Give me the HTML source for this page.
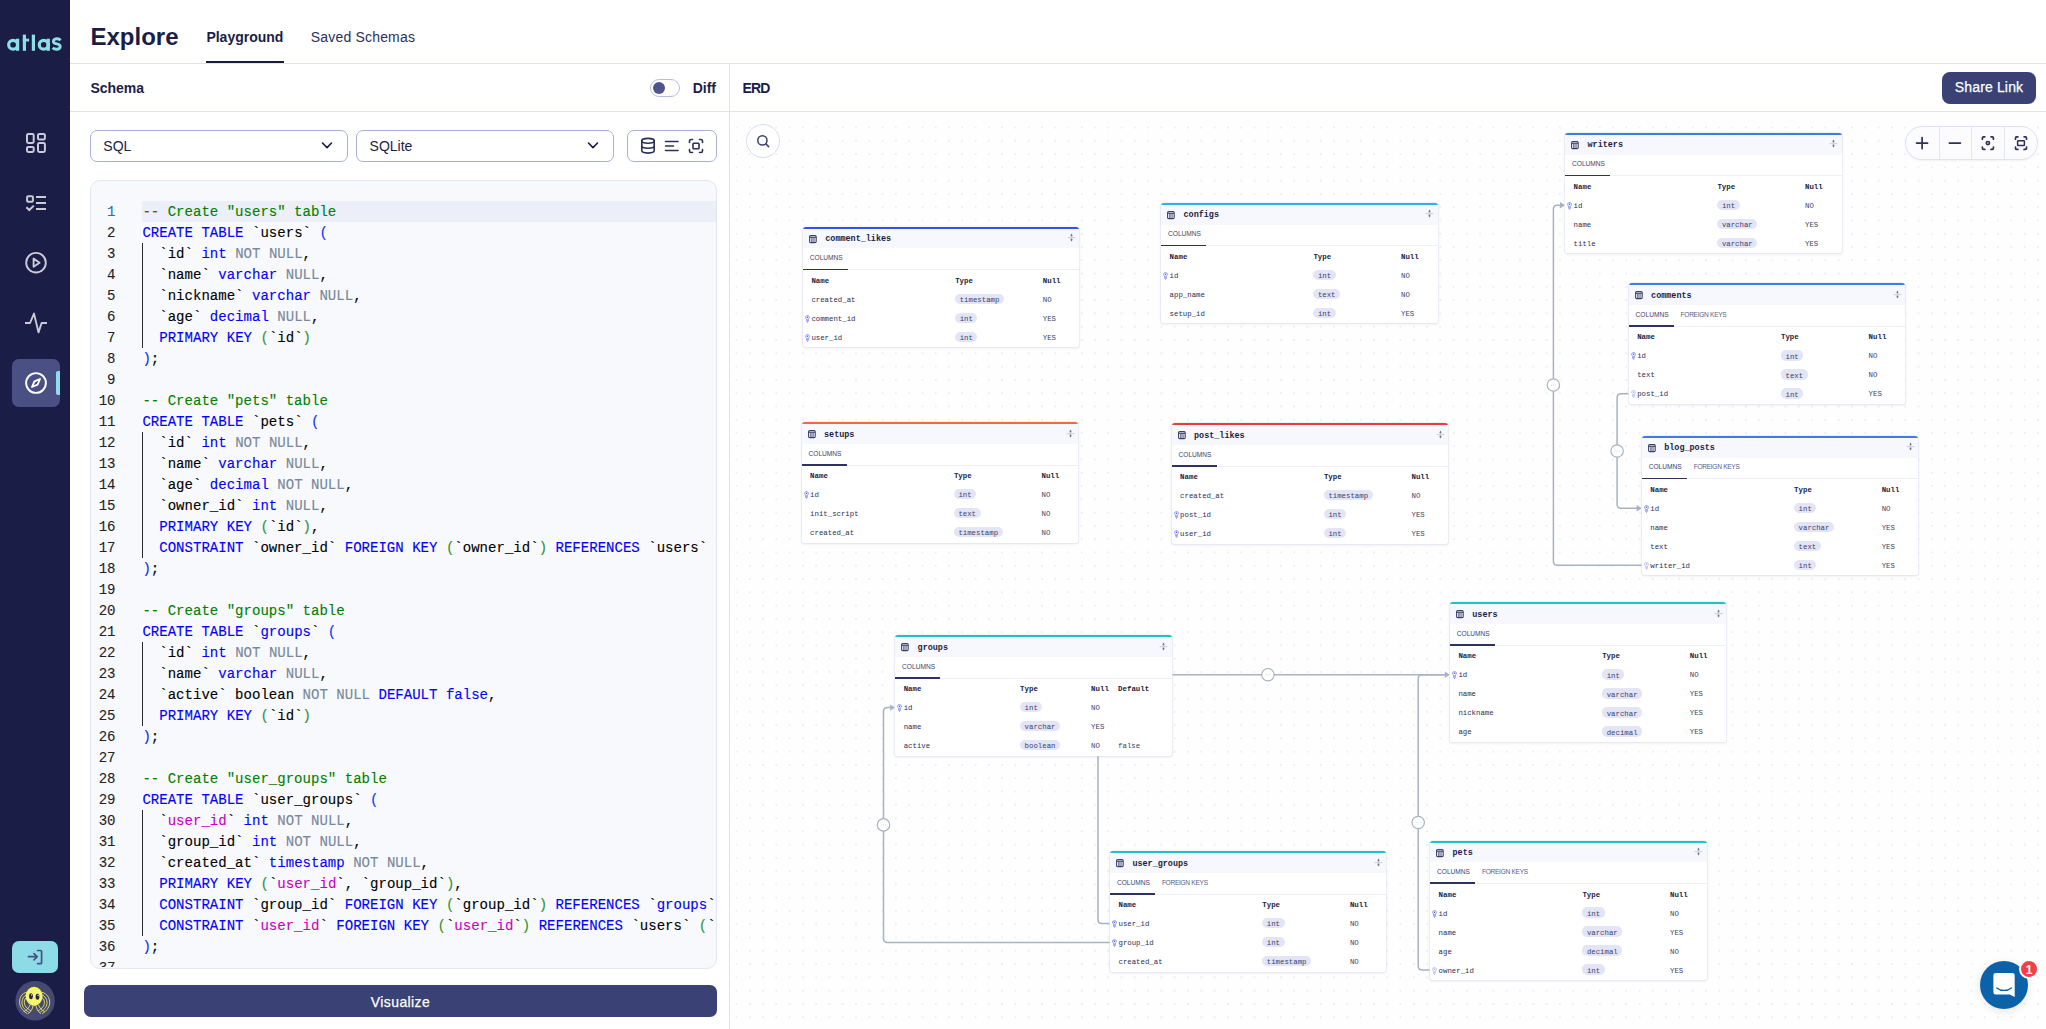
<!DOCTYPE html>
<html><head><meta charset="utf-8"><title>Atlas Explore</title><style>
*{box-sizing:border-box;margin:0;padding:0}
html,body{width:2046px;height:1029px;overflow:hidden;background:#fff;font-family:"Liberation Sans",sans-serif;color:#1a1d45}
.abs{position:absolute}
#side{position:absolute;left:0;top:0;width:70px;height:1029px;background:#1a1d45}
.txt{position:absolute;white-space:pre;line-height:1}
.hline{position:absolute;height:1px;background:#dfe2f2}
.vline{position:absolute;width:1px;background:#dfe2f2}
.sel{position:absolute;height:32px;border:1px solid #a9afd6;border-radius:7px;background:#fff}
#editor{position:absolute;left:90px;top:180px;width:627px;height:788.5px;background:#f8f9fd;border:1px solid #e2e5f4;border-radius:10px;overflow:hidden}
.ln{position:absolute;left:0;width:115.5px;-webkit-text-stroke:0.1px;text-align:right;font-family:"Liberation Mono",monospace;font-size:14.05px;margin-top:1px;line-height:21px;height:21px;color:#222;white-space:pre}
.ln.act{color:#1f6fb2}
.cl{position:absolute;left:142.4px;font-family:"Liberation Mono",monospace;font-size:14.05px;line-height:21px;height:21px;color:#000;white-space:pre;margin-top:1px;-webkit-text-stroke:0.12px}
.c{color:#008000}.k{color:#0000ff}.o{color:#778899}.p{color:#c700c7}.b1{color:#0431fa}.b2{color:#319331}
#canvas{position:absolute;left:730px;top:112px;width:1316px;height:917px;overflow:hidden;background:#fefeff}
.edges{position:absolute;left:0;top:0}
.tb{position:absolute;width:276.5px;background:#fff;border-top:2px solid #3a7de9;border-radius:3px 3px 2px 2px;box-shadow:0 0 0 0.6px rgba(225,228,240,0.9),0 1px 3px rgba(30,30,70,0.10)}
.th{position:absolute;left:0;top:0;width:100%;height:19.8px;background:#f7f8fe}
.ticon{position:absolute;left:6.4px;top:6px}
.move{position:absolute;left:264px;top:4.5px}
.tname{position:absolute;left:22.5px;top:6.6px;font-family:"Liberation Mono",monospace;font-weight:700;font-size:8.45px;line-height:1;color:#1a1d45;white-space:pre}
.tabs{position:absolute;left:0;top:19px;width:100%;height:22.5px;border-bottom:1px solid #eef0f7}
.tab1,.tab2{position:absolute;top:7.6px;font-size:6.6px;line-height:1;color:#3d4268;white-space:pre}
.tab1{left:7px}.tab2{left:52px;color:#585d86;letter-spacing:-0.3px}
.tabul{position:absolute;left:0;bottom:-1px;width:45px;height:1.6px;background:#2d3260}
.hd{position:absolute;font-family:"Liberation Mono",monospace;font-weight:700;font-size:7.4px;line-height:1;color:#1a1d45;white-space:pre}
.rn,.rv{position:absolute;font-family:"Liberation Mono",monospace;font-size:7.35px;line-height:1;color:#2a2e55;white-space:pre}
.rv{color:#3a3f66}
.pill{position:absolute;height:10.3px;padding:3.3px 4.5px 0 4.5px;border-radius:5px;background:#e3e5f6;font-family:"Liberation Mono",monospace;font-size:7.35px;line-height:1;color:#3a3f6a;white-space:pre;margin-top:-2.6px}
.kw{position:absolute;left:2.1px}
.key{display:block}

</style></head><body>
<div id="side">
  <svg class="abs" style="left:0;top:0" width="70" height="70" viewBox="0 0 70 70">
    <g fill="#8fdde8">
      <path d="M13.1 38.7a6.05 6.05 0 1 0 0 12.1a6.05 6.05 0 1 0 0-12.1zm0 3.2a2.85 2.85 0 1 1 0 5.7a2.85 2.85 0 1 1 0-5.7z"/>
      <rect x="16" y="38.7" width="3.2" height="12.1"/>
      <rect x="22.8" y="34.6" width="3.2" height="16.2"/>
      <rect x="22.8" y="38.7" width="6.3" height="2.8"/>
      <rect x="31.8" y="34.6" width="3.2" height="16.2"/>
      <path d="M43.7 38.7a6.05 6.05 0 1 0 0 12.1a6.05 6.05 0 1 0 0-12.1zm0 3.2a2.85 2.85 0 1 1 0 5.7a2.85 2.85 0 1 1 0-5.7z"/>
      <rect x="46.6" y="38.7" width="3.3" height="12.1"/>
    </g>
    <path d="M60.6 40.2c-0.8-0.9-2.2-1.4-3.6-1.4c-2 0-3.6 1.1-3.6 2.6c0 1.6 1.5 2.1 3.4 2.5c1.9 0.4 3.4 0.9 3.4 2.6c0 1.6-1.6 2.7-3.6 2.7c-1.6 0-3-0.5-3.9-1.5" fill="none" stroke="#8fdde8" stroke-width="2.9"/>
  </svg>
  <!-- dashboard -->
  <svg class="abs" style="left:25px;top:132px" width="22" height="22" viewBox="0 0 22 22" fill="none" stroke="#c9cbd8" stroke-width="2">
    <rect x="2" y="2" width="6.7" height="8.9" rx="1.3"/><rect x="13" y="2" width="6.9" height="5.6" rx="1.3"/>
    <rect x="2" y="15" width="6.7" height="4.9" rx="1.3"/><rect x="13" y="11" width="6.9" height="8.9" rx="1.3"/>
  </svg>
  <!-- list check -->
  <svg class="abs" style="left:25px;top:194px" width="22" height="20" viewBox="0 0 22 20" fill="none" stroke="#c9cbd8" stroke-width="2">
    <rect x="2.1" y="2.3" width="5.8" height="5.5" rx="1"/><path d="M11 3H21M11 9H21M11 15H21"/><path d="M1.4 13.2L4.3 16L8.8 11.6"/>
  </svg>
  <!-- play -->
  <svg class="abs" style="left:24px;top:251px" width="24" height="24" viewBox="0 0 24 24" fill="none" stroke="#c9cbd8" stroke-width="1.9">
    <circle cx="12" cy="11.7" r="9.8"/><path d="M9.6 7.6V15.8L15.6 11.7Z" stroke-linejoin="round"/>
  </svg>
  <!-- activity -->
  <svg class="abs" style="left:24px;top:312px" width="24" height="22" viewBox="0 0 24 22" fill="none" stroke="#c9cbd8" stroke-width="1.9" stroke-linejoin="round">
    <path d="M1 11H6L10 1.6L14.5 20.4L17.6 11H23"/>
  </svg>
  <!-- active compass -->
  <div class="abs" style="left:12px;top:359px;width:48px;height:48px;border-radius:7px;background:#4a5083"></div>
  <div class="abs" style="left:55.6px;top:371px;width:4.4px;height:24px;border-radius:2px 0 0 2px;background:#8fdde8"></div>
  <svg class="abs" style="left:24px;top:371px" width="24" height="24" viewBox="0 0 24 24" fill="none" stroke="#fff" stroke-width="1.9" stroke-linejoin="round">
    <circle cx="12" cy="12" r="9.9"/><path d="M16 8L13.6 13.6L8 16L10.4 10.4Z"/>
  </svg>
  <!-- login -->
  <div class="abs" style="left:12px;top:941px;width:46px;height:32px;border-radius:7px;background:#8ddbe6"></div>
  <svg class="abs" style="left:26px;top:947px" width="18" height="20" viewBox="0 0 18 20" fill="none" stroke="#4a5083" stroke-width="1.7" stroke-linecap="round" stroke-linejoin="round">
    <path d="M2.4 9.7H11M8 6.6L11.2 9.7L8 12.8"/><path d="M11.6 3.5H14.6C15.2 3.5 15.6 3.9 15.6 4.5V15.7C15.6 16.3 15.2 16.7 14.6 16.7H11.6"/>
  </svg>
  <!-- avatar -->
  <svg class="abs" style="left:15px;top:981px" width="40" height="40" viewBox="0 0 40 40">
    <circle cx="20.1" cy="19.7" r="19.7" fill="#474a70"/>
    <g fill="none" stroke="#f2f06a" stroke-width="0.85" stroke-linecap="round">
      <path d="M13 11C8 11.5 5 15 4.6 20C4.3 25 7 29.5 12 32.5"/>
      <path d="M13.5 13C9.5 14 7.2 17 7 21C6.8 25 9 28.5 13.5 31"/>
      <path d="M12 16C9.5 17.5 8.8 20.5 9.6 23.5C10.4 26 12.5 28 15.5 29.5"/>
      <path d="M15 24C14 27 11.5 29.5 9 30.5"/>
      <path d="M25.5 11C30.5 11.5 33.8 15 34.6 20C35.2 25 32.5 29.5 27.5 32.5"/>
      <path d="M25 13C29 14 31.6 17 32 21C32.3 25 30 28.5 25.5 31"/>
      <path d="M26.5 16C29 17.5 30 20.5 29.2 23.5C28.4 26 26.3 28 23.5 29.5"/>
      <path d="M23.5 24C24.5 27 27 29.5 29.5 30.5"/>
      <path d="M18 25C17.5 28 16 30.5 13.5 32.5"/><path d="M21 25C21.5 28 23 30.5 25.5 32.5"/>
    </g>
    <ellipse cx="19.1" cy="15.3" rx="8.4" ry="9.6" fill="#f6f56c"/>
    <ellipse cx="16" cy="15.3" rx="1.9" ry="3" fill="#23264d"/><ellipse cx="22.5" cy="15.8" rx="1.9" ry="3" fill="#23264d"/>
    <circle cx="16.6" cy="13.9" r="0.6" fill="#fff"/><circle cx="23.1" cy="14.4" r="0.6" fill="#fff"/>
  </svg>
</div>

<!-- header -->
<div class="txt" style="left:90.5px;top:24.6px;font-size:24px;font-weight:700;color:#1a1d45">Explore</div>
<div class="txt" style="left:206.4px;top:29.6px;font-size:14px;font-weight:700;color:#1a1d45">Playground</div>
<div class="abs" style="left:206px;top:61px;width:78px;height:2.4px;background:#161a3f"></div>
<div class="txt" style="left:310.8px;top:29.8px;font-size:14px;color:#2b3058;letter-spacing:0.18px">Saved Schemas</div>
<div class="hline" style="left:70px;top:63px;width:1976px"></div>

<!-- schema bar -->
<div class="txt" style="left:90.4px;top:81px;font-size:14px;font-weight:700;color:#1a1d45">Schema</div>
<div class="abs" style="left:650px;top:79px;width:30px;height:18px;border:1px solid #b9bfe2;border-radius:9px;background:#fff"></div>
<div class="abs" style="left:653px;top:82px;width:12px;height:12px;border-radius:6px;background:#4e5589"></div>
<div class="txt" style="left:692.7px;top:81px;font-size:14px;font-weight:700;color:#1a1d45">Diff</div>
<div class="hline" style="left:70px;top:111px;width:1976px"></div>
<div class="vline" style="left:729px;top:64px;height:965px"></div>

<!-- selects -->
<div class="sel" style="left:90px;top:130px;width:258px"></div>
<div class="txt" style="left:103.3px;top:139.4px;font-size:14px;color:#1a1d45">SQL</div>
<svg class="abs" style="left:321px;top:141px" width="12" height="9" viewBox="0 0 12 9" fill="none" stroke="#1a1d45" stroke-width="1.6" stroke-linecap="round" stroke-linejoin="round"><path d="M1.5 2L6 6.6L10.5 2"/></svg>
<div class="sel" style="left:356px;top:130px;width:258px"></div>
<div class="txt" style="left:369.6px;top:139.4px;font-size:14px;color:#1a1d45">SQLite</div>
<svg class="abs" style="left:587px;top:141px" width="12" height="9" viewBox="0 0 12 9" fill="none" stroke="#1a1d45" stroke-width="1.6" stroke-linecap="round" stroke-linejoin="round"><path d="M1.5 2L6 6.6L10.5 2"/></svg>
<div class="sel" style="left:627px;top:130px;width:90px"></div>
<svg class="abs" style="left:627px;top:130px" width="90" height="32" viewBox="0 0 90 32" fill="none" stroke="#2b3058" stroke-width="1.6" stroke-linecap="round" stroke-linejoin="round">
  <ellipse cx="21" cy="10.8" rx="6.2" ry="2.4"/><path d="M14.8 10.8V20.6C14.8 22 17.6 23.1 21 23.1C24.4 23.1 27.2 22 27.2 20.6V10.8M14.8 15.7C14.8 17.1 17.6 18.2 21 18.2C24.4 18.2 27.2 17.1 27.2 15.7"/>
  <path d="M38.6 11.5H51M38.6 16H46.5M38.6 20.5H51"/>
  <path d="M62.5 12.5V11C62.5 10 63 9.5 64 9.5H65.5M72.5 9.5H74C75 9.5 75.5 10 75.5 11V12.5M75.5 19.5V21C75.5 22 75 22.5 74 22.5H72.5M65.5 22.5H64C63 22.5 62.5 22 62.5 21V19.5"/>
  <rect x="66" y="13.2" width="6" height="5.6" rx="0.8"/>
</svg>

<!-- editor -->
<div id="editor">
  <div class="abs" style="left:51.4px;top:20px;width:575px;height:21px;background:#eceef8"></div>
  <div class="abs" style="left:51.2px;top:62px;width:1px;height:105px;background:#2a2a2a"></div>
  <div class="abs" style="left:51.2px;top:251px;width:1px;height:126px;background:#2a2a2a"></div>
  <div class="abs" style="left:51.2px;top:461px;width:1px;height:84px;background:#2a2a2a"></div>
  <div class="abs" style="left:51.2px;top:629px;width:1px;height:126px;background:#2a2a2a"></div>
  <div class="abs" style="left:0;top:0;width:624px;height:786px;overflow:hidden"><div id="code" class="abs" style="left:-91px;top:-181px;width:800px;height:1100px">
<div class="ln act" style="top:201px">1</div>
<div class="cl" style="top:201px"><span class="c">-- Create &quot;users&quot; table</span></div>
<div class="ln" style="top:222px">2</div>
<div class="cl" style="top:222px"><span class="k">CREATE</span> <span class="k">TABLE</span> `users` <span class="b1">(</span></div>
<div class="ln" style="top:243px">3</div>
<div class="cl" style="top:243px">  `id` <span class="k">int</span> <span class="o">NOT</span> <span class="o">NULL</span>,</div>
<div class="ln" style="top:264px">4</div>
<div class="cl" style="top:264px">  `name` <span class="k">varchar</span> <span class="o">NULL</span>,</div>
<div class="ln" style="top:285px">5</div>
<div class="cl" style="top:285px">  `nickname` <span class="k">varchar</span> <span class="o">NULL</span>,</div>
<div class="ln" style="top:306px">6</div>
<div class="cl" style="top:306px">  `age` <span class="k">decimal</span> <span class="o">NULL</span>,</div>
<div class="ln" style="top:327px">7</div>
<div class="cl" style="top:327px">  <span class="k">PRIMARY</span> <span class="k">KEY</span> <span class="b2">(</span>`id`<span class="b2">)</span></div>
<div class="ln" style="top:348px">8</div>
<div class="cl" style="top:348px"><span class="b1">)</span>;</div>
<div class="ln" style="top:369px">9</div>
<div class="cl" style="top:369px"></div>
<div class="ln" style="top:390px">10</div>
<div class="cl" style="top:390px"><span class="c">-- Create &quot;pets&quot; table</span></div>
<div class="ln" style="top:411px">11</div>
<div class="cl" style="top:411px"><span class="k">CREATE</span> <span class="k">TABLE</span> `pets` <span class="b1">(</span></div>
<div class="ln" style="top:432px">12</div>
<div class="cl" style="top:432px">  `id` <span class="k">int</span> <span class="o">NOT</span> <span class="o">NULL</span>,</div>
<div class="ln" style="top:453px">13</div>
<div class="cl" style="top:453px">  `name` <span class="k">varchar</span> <span class="o">NULL</span>,</div>
<div class="ln" style="top:474px">14</div>
<div class="cl" style="top:474px">  `age` <span class="k">decimal</span> <span class="o">NOT</span> <span class="o">NULL</span>,</div>
<div class="ln" style="top:495px">15</div>
<div class="cl" style="top:495px">  `owner_id` <span class="k">int</span> <span class="o">NULL</span>,</div>
<div class="ln" style="top:516px">16</div>
<div class="cl" style="top:516px">  <span class="k">PRIMARY</span> <span class="k">KEY</span> <span class="b2">(</span>`id`<span class="b2">)</span>,</div>
<div class="ln" style="top:537px">17</div>
<div class="cl" style="top:537px">  <span class="k">CONSTRAINT</span> `owner_id` <span class="k">FOREIGN</span> <span class="k">KEY</span> <span class="b2">(</span>`owner_id`<span class="b2">)</span> <span class="k">REFERENCES</span> `users` <span class="b2">(</span>`id`<span class="b2">)</span> <span class="k">ON</span> <span class="k">DELETE</span> <span class="k">CASCADE</span></div>
<div class="ln" style="top:558px">18</div>
<div class="cl" style="top:558px"><span class="b1">)</span>;</div>
<div class="ln" style="top:579px">19</div>
<div class="cl" style="top:579px"></div>
<div class="ln" style="top:600px">20</div>
<div class="cl" style="top:600px"><span class="c">-- Create &quot;groups&quot; table</span></div>
<div class="ln" style="top:621px">21</div>
<div class="cl" style="top:621px"><span class="k">CREATE</span> <span class="k">TABLE</span> `<span class="k">groups</span>` <span class="b1">(</span></div>
<div class="ln" style="top:642px">22</div>
<div class="cl" style="top:642px">  `id` <span class="k">int</span> <span class="o">NOT</span> <span class="o">NULL</span>,</div>
<div class="ln" style="top:663px">23</div>
<div class="cl" style="top:663px">  `name` <span class="k">varchar</span> <span class="o">NULL</span>,</div>
<div class="ln" style="top:684px">24</div>
<div class="cl" style="top:684px">  `active` boolean <span class="o">NOT</span> <span class="o">NULL</span> <span class="k">DEFAULT</span> <span class="k">false</span>,</div>
<div class="ln" style="top:705px">25</div>
<div class="cl" style="top:705px">  <span class="k">PRIMARY</span> <span class="k">KEY</span> <span class="b2">(</span>`id`<span class="b2">)</span></div>
<div class="ln" style="top:726px">26</div>
<div class="cl" style="top:726px"><span class="b1">)</span>;</div>
<div class="ln" style="top:747px">27</div>
<div class="cl" style="top:747px"></div>
<div class="ln" style="top:768px">28</div>
<div class="cl" style="top:768px"><span class="c">-- Create &quot;user_groups&quot; table</span></div>
<div class="ln" style="top:789px">29</div>
<div class="cl" style="top:789px"><span class="k">CREATE</span> <span class="k">TABLE</span> `user_groups` <span class="b1">(</span></div>
<div class="ln" style="top:810px">30</div>
<div class="cl" style="top:810px">  `<span class="p">user_id</span>` <span class="k">int</span> <span class="o">NOT</span> <span class="o">NULL</span>,</div>
<div class="ln" style="top:831px">31</div>
<div class="cl" style="top:831px">  `group_id` <span class="k">int</span> <span class="o">NOT</span> <span class="o">NULL</span>,</div>
<div class="ln" style="top:852px">32</div>
<div class="cl" style="top:852px">  `created_at` <span class="k">timestamp</span> <span class="o">NOT</span> <span class="o">NULL</span>,</div>
<div class="ln" style="top:873px">33</div>
<div class="cl" style="top:873px">  <span class="k">PRIMARY</span> <span class="k">KEY</span> <span class="b2">(</span>`<span class="p">user_id</span>`, `group_id`<span class="b2">)</span>,</div>
<div class="ln" style="top:894px">34</div>
<div class="cl" style="top:894px">  <span class="k">CONSTRAINT</span> `group_id` <span class="k">FOREIGN</span> <span class="k">KEY</span> <span class="b2">(</span>`group_id`<span class="b2">)</span> <span class="k">REFERENCES</span> `<span class="k">groups</span>` <span class="b2">(</span>`id`<span class="b2">)</span></div>
<div class="ln" style="top:915px">35</div>
<div class="cl" style="top:915px">  <span class="k">CONSTRAINT</span> `<span class="p">user_id</span>` <span class="k">FOREIGN</span> <span class="k">KEY</span> <span class="b2">(</span>`<span class="p">user_id</span>`<span class="b2">)</span> <span class="k">REFERENCES</span> `users` <span class="b2">(</span>`id`<span class="b2">)</span></div>
<div class="ln" style="top:936px">36</div>
<div class="cl" style="top:936px"><span class="b1">)</span>;</div>
<div class="ln" style="top:957px">37</div>
<div class="cl" style="top:957px"></div>
  </div></div>
</div>

<!-- visualize -->
<div class="abs" style="left:84px;top:985px;width:633px;height:32px;border-radius:7px;background:#394175"></div>
<div class="txt" style="left:84px;top:995px;width:633px;text-align:center;font-size:14px;color:#fff;letter-spacing:0.4px;-webkit-text-stroke:0.25px #fff">Visualize</div>

<!-- ERD header -->
<div class="txt" style="left:742.6px;top:81px;font-size:14px;font-weight:700;color:#1a1d45;letter-spacing:-0.95px">ERD</div>
<div class="abs" style="left:1942px;top:72px;width:94px;height:32px;border-radius:8px;background:#394175"></div>
<div class="txt" style="left:1942px;top:79.9px;width:94px;text-align:center;font-size:14px;color:#fff;letter-spacing:0.15px;-webkit-text-stroke:0.25px #fff">Share Link</div>

<!-- canvas -->
<div id="canvas">
  <svg class="abs" style="left:0;top:8px" width="1316" height="909">
    <defs><pattern id="dots" x="-0.14" y="0.86" width="13.28" height="13.28" patternUnits="userSpaceOnUse"><circle cx="6.64" cy="6.64" r="0.6" fill="#c9cdee"/></pattern></defs>
    <rect width="1316" height="909" fill="url(#dots)"/>
  </svg>
  <div class="abs" style="left:-730px;top:-112px;width:2046px;height:1029px">
<svg class="edges" width="2046" height="1029" viewBox="0 0 2046 1029">
<path d="M1641.7 565.2 H1557.4 Q1553.4 565.2 1553.4 561.2 V209.2 Q1553.4 205.2 1557.4 205.2 H1560" fill="none" stroke="#a7b3bf" stroke-width="1.5"/>
<path d="M1628.6 393.8 H1621.1 Q1617.1 393.8 1617.1 397.8 V504.2 Q1617.1 508.2 1621.1 508.2 H1637" fill="none" stroke="#a7b3bf" stroke-width="1.5"/>
<path d="M1109.9 923.4 H1102 Q1098 923.4 1098 919.4 V678.7 Q1098 674.7 1102 674.7 H1445" fill="none" stroke="#a7b3bf" stroke-width="1.5"/>
<path d="M1430 969.9 H1422.2 Q1418.2 969.9 1418.2 965.9 V678.7 Q1418.2 674.7 1422.2 674.7 H1445" fill="none" stroke="#a7b3bf" stroke-width="1.5"/>
<path d="M1109.9 942.4 H887.5 Q883.5 942.4 883.5 938.4 V711.6 Q883.5 707.6 887.5 707.6 H890" fill="none" stroke="#a7b3bf" stroke-width="1.5"/>
<path d="M1565 205.2 L1560 202.0 L1560 208.39999999999998 Z" fill="#a7b3bf"/>
<path d="M1641.7 508.2 L1636.7 505.0 L1636.7 511.4 Z" fill="#a7b3bf"/>
<path d="M1449.8 674.7 L1444.8 671.5 L1444.8 677.9000000000001 Z" fill="#a7b3bf"/>
<path d="M895.1 707.6 L890.1 704.4 L890.1 710.8000000000001 Z" fill="#a7b3bf"/>
<circle cx="1553.4" cy="385" r="6.2" fill="#fff" stroke="#a7b3bf" stroke-width="1.2"/>
<circle cx="1551.4" cy="385" r="0.45" fill="#a7b3bf"/>
<circle cx="1553.4" cy="385" r="0.45" fill="#a7b3bf"/>
<circle cx="1555.4" cy="385" r="0.45" fill="#a7b3bf"/>
<circle cx="1617.1" cy="451" r="6.2" fill="#fff" stroke="#a7b3bf" stroke-width="1.2"/>
<circle cx="1615.1" cy="451" r="0.45" fill="#a7b3bf"/>
<circle cx="1617.1" cy="451" r="0.45" fill="#a7b3bf"/>
<circle cx="1619.1" cy="451" r="0.45" fill="#a7b3bf"/>
<circle cx="1267.9" cy="674.7" r="6.2" fill="#fff" stroke="#a7b3bf" stroke-width="1.2"/>
<circle cx="1265.9" cy="674.7" r="0.45" fill="#a7b3bf"/>
<circle cx="1267.9" cy="674.7" r="0.45" fill="#a7b3bf"/>
<circle cx="1269.9" cy="674.7" r="0.45" fill="#a7b3bf"/>
<circle cx="1418.2" cy="822.5" r="6.2" fill="#fff" stroke="#a7b3bf" stroke-width="1.2"/>
<circle cx="1416.2" cy="822.5" r="0.45" fill="#a7b3bf"/>
<circle cx="1418.2" cy="822.5" r="0.45" fill="#a7b3bf"/>
<circle cx="1420.2" cy="822.5" r="0.45" fill="#a7b3bf"/>
<circle cx="883.5" cy="824.9" r="6.2" fill="#fff" stroke="#a7b3bf" stroke-width="1.2"/>
<circle cx="881.5" cy="824.9" r="0.45" fill="#a7b3bf"/>
<circle cx="883.5" cy="824.9" r="0.45" fill="#a7b3bf"/>
<circle cx="885.5" cy="824.9" r="0.45" fill="#a7b3bf"/>
</svg>
<div class="tb" style="left:802.8px;top:226.6px;height:120.5px;border-top-color:#3452ee">
<div class="th">
<svg class="ticon" width="8" height="9" viewBox="0 0 8 9"><rect x="0.6" y="0.6" width="6.6" height="7" rx="1.1" fill="none" stroke="#3b4068" stroke-width="1.1"/><path d="M0.6 2.3H7.2" stroke="#3b4068" stroke-width="1"/><path d="M2.6 2.6V7.6M3.9 2.6V7.6M5.2 2.6V7.6" stroke="#3b4068" stroke-width="0.7"/></svg>
<span class="tname">comment_likes</span>
<svg class="move" width="9" height="9" viewBox="0 0 9 9"><path d="M0.6 4.6H8.4" stroke="#cfd2db" stroke-width="1.1"/><path d="M4.5 0.6L5.5 2.2L5.2 3.6H3.8L3.5 2.2Z M4.5 8.5L5.5 6.9L5.2 5.5H3.8L3.5 6.9Z" fill="#74788a"/></svg>
</div>
<div class="tabs"><span class="tab1">COLUMNS</span><div class="tabul"></div></div>
<div class="hd" style="left:8.6px;top:49px">Name</div>
<div class="hd" style="left:152.4px;top:49px">Type</div>
<div class="hd" style="left:240px;top:49px">Null</div>
<div class="rn" style="left:8.6px;top:68px">created_at</div>
<div class="pill" style="left:152.4px;top:67.5px">timestamp</div>
<div class="rv" style="left:240px;top:68px">NO</div>
<div class="kw" style="top:86.1px"><svg class="key" width="5" height="8" viewBox="0 0 5 8"><path d="M2.5 0.55C3.65 0.55 4.45 1.4 4.45 2.45C4.45 3.25 3.95 3.8 3.35 4.1L3.15 6.7L2.5 7.5L1.85 6.7L1.65 4.1C1.05 3.8 0.55 3.25 0.55 2.45C0.55 1.4 1.35 0.55 2.5 0.55Z" fill="#fff" stroke="#8592f7" stroke-width="0.95"/><circle cx="2.5" cy="2.35" r="0.75" fill="#3a4cf5"/><path d="M2.5 4.3V6.6" stroke="#8592f7" stroke-width="0.7"/></svg></div>
<div class="rn" style="left:8.6px;top:87px">comment_id</div>
<div class="pill" style="left:152.4px;top:86.5px">int</div>
<div class="rv" style="left:240px;top:87px">YES</div>
<div class="kw" style="top:105.1px"><svg class="key" width="5" height="8" viewBox="0 0 5 8"><path d="M2.5 0.55C3.65 0.55 4.45 1.4 4.45 2.45C4.45 3.25 3.95 3.8 3.35 4.1L3.15 6.7L2.5 7.5L1.85 6.7L1.65 4.1C1.05 3.8 0.55 3.25 0.55 2.45C0.55 1.4 1.35 0.55 2.5 0.55Z" fill="#fff" stroke="#8592f7" stroke-width="0.95"/><circle cx="2.5" cy="2.35" r="0.75" fill="#3a4cf5"/><path d="M2.5 4.3V6.6" stroke="#8592f7" stroke-width="0.7"/></svg></div>
<div class="rn" style="left:8.6px;top:106px">user_id</div>
<div class="pill" style="left:152.4px;top:105.5px">int</div>
<div class="rv" style="left:240px;top:106px">YES</div>
</div>
<div class="tb" style="left:1161px;top:202.9px;height:120.5px;border-top-color:#2cb0f2">
<div class="th">
<svg class="ticon" width="8" height="9" viewBox="0 0 8 9"><rect x="0.6" y="0.6" width="6.6" height="7" rx="1.1" fill="none" stroke="#3b4068" stroke-width="1.1"/><path d="M0.6 2.3H7.2" stroke="#3b4068" stroke-width="1"/><path d="M2.6 2.6V7.6M3.9 2.6V7.6M5.2 2.6V7.6" stroke="#3b4068" stroke-width="0.7"/></svg>
<span class="tname">configs</span>
<svg class="move" width="9" height="9" viewBox="0 0 9 9"><path d="M0.6 4.6H8.4" stroke="#cfd2db" stroke-width="1.1"/><path d="M4.5 0.6L5.5 2.2L5.2 3.6H3.8L3.5 2.2Z M4.5 8.5L5.5 6.9L5.2 5.5H3.8L3.5 6.9Z" fill="#74788a"/></svg>
</div>
<div class="tabs"><span class="tab1">COLUMNS</span><div class="tabul"></div></div>
<div class="hd" style="left:8.6px;top:49px">Name</div>
<div class="hd" style="left:152.4px;top:49px">Type</div>
<div class="hd" style="left:240px;top:49px">Null</div>
<div class="kw" style="top:67.1px"><svg class="key" width="5" height="8" viewBox="0 0 5 8"><path d="M2.5 0.55C3.65 0.55 4.45 1.4 4.45 2.45C4.45 3.25 3.95 3.8 3.35 4.1L3.15 6.7L2.5 7.5L1.85 6.7L1.65 4.1C1.05 3.8 0.55 3.25 0.55 2.45C0.55 1.4 1.35 0.55 2.5 0.55Z" fill="#fff" stroke="#8592f7" stroke-width="0.95"/><circle cx="2.5" cy="2.35" r="0.75" fill="#3a4cf5"/><path d="M2.5 4.3V6.6" stroke="#8592f7" stroke-width="0.7"/></svg></div>
<div class="rn" style="left:8.6px;top:68px">id</div>
<div class="pill" style="left:152.4px;top:67.5px">int</div>
<div class="rv" style="left:240px;top:68px">NO</div>
<div class="rn" style="left:8.6px;top:87px">app_name</div>
<div class="pill" style="left:152.4px;top:86.5px">text</div>
<div class="rv" style="left:240px;top:87px">NO</div>
<div class="rn" style="left:8.6px;top:106px">setup_id</div>
<div class="pill" style="left:152.4px;top:105.5px">int</div>
<div class="rv" style="left:240px;top:106px">YES</div>
</div>
<div class="tb" style="left:1565px;top:132.8px;height:120.5px;border-top-color:#3a7de9">
<div class="th">
<svg class="ticon" width="8" height="9" viewBox="0 0 8 9"><rect x="0.6" y="0.6" width="6.6" height="7" rx="1.1" fill="none" stroke="#3b4068" stroke-width="1.1"/><path d="M0.6 2.3H7.2" stroke="#3b4068" stroke-width="1"/><path d="M2.6 2.6V7.6M3.9 2.6V7.6M5.2 2.6V7.6" stroke="#3b4068" stroke-width="0.7"/></svg>
<span class="tname">writers</span>
<svg class="move" width="9" height="9" viewBox="0 0 9 9"><path d="M0.6 4.6H8.4" stroke="#cfd2db" stroke-width="1.1"/><path d="M4.5 0.6L5.5 2.2L5.2 3.6H3.8L3.5 2.2Z M4.5 8.5L5.5 6.9L5.2 5.5H3.8L3.5 6.9Z" fill="#74788a"/></svg>
</div>
<div class="tabs"><span class="tab1">COLUMNS</span><div class="tabul"></div></div>
<div class="hd" style="left:8.6px;top:49px">Name</div>
<div class="hd" style="left:152.4px;top:49px">Type</div>
<div class="hd" style="left:240px;top:49px">Null</div>
<div class="kw" style="top:67.1px"><svg class="key" width="5" height="8" viewBox="0 0 5 8"><path d="M2.5 0.55C3.65 0.55 4.45 1.4 4.45 2.45C4.45 3.25 3.95 3.8 3.35 4.1L3.15 6.7L2.5 7.5L1.85 6.7L1.65 4.1C1.05 3.8 0.55 3.25 0.55 2.45C0.55 1.4 1.35 0.55 2.5 0.55Z" fill="#fff" stroke="#8592f7" stroke-width="0.95"/><circle cx="2.5" cy="2.35" r="0.75" fill="#3a4cf5"/><path d="M2.5 4.3V6.6" stroke="#8592f7" stroke-width="0.7"/></svg></div>
<div class="rn" style="left:8.6px;top:68px">id</div>
<div class="pill" style="left:152.4px;top:67.5px">int</div>
<div class="rv" style="left:240px;top:68px">NO</div>
<div class="rn" style="left:8.6px;top:87px">name</div>
<div class="pill" style="left:152.4px;top:86.5px">varchar</div>
<div class="rv" style="left:240px;top:87px">YES</div>
<div class="rn" style="left:8.6px;top:106px">title</div>
<div class="pill" style="left:152.4px;top:105.5px">varchar</div>
<div class="rv" style="left:240px;top:106px">YES</div>
</div>
<div class="tb" style="left:1628.6px;top:283.4px;height:120.5px;border-top-color:#3a7de9">
<div class="th">
<svg class="ticon" width="8" height="9" viewBox="0 0 8 9"><rect x="0.6" y="0.6" width="6.6" height="7" rx="1.1" fill="none" stroke="#3b4068" stroke-width="1.1"/><path d="M0.6 2.3H7.2" stroke="#3b4068" stroke-width="1"/><path d="M2.6 2.6V7.6M3.9 2.6V7.6M5.2 2.6V7.6" stroke="#3b4068" stroke-width="0.7"/></svg>
<span class="tname">comments</span>
<svg class="move" width="9" height="9" viewBox="0 0 9 9"><path d="M0.6 4.6H8.4" stroke="#cfd2db" stroke-width="1.1"/><path d="M4.5 0.6L5.5 2.2L5.2 3.6H3.8L3.5 2.2Z M4.5 8.5L5.5 6.9L5.2 5.5H3.8L3.5 6.9Z" fill="#74788a"/></svg>
</div>
<div class="tabs"><span class="tab1">COLUMNS</span><span class="tab2">FOREIGN KEYS</span><div class="tabul"></div></div>
<div class="hd" style="left:8.6px;top:49px">Name</div>
<div class="hd" style="left:152.4px;top:49px">Type</div>
<div class="hd" style="left:240px;top:49px">Null</div>
<div class="kw" style="top:67.1px"><svg class="key" width="5" height="8" viewBox="0 0 5 8"><path d="M2.5 0.55C3.65 0.55 4.45 1.4 4.45 2.45C4.45 3.25 3.95 3.8 3.35 4.1L3.15 6.7L2.5 7.5L1.85 6.7L1.65 4.1C1.05 3.8 0.55 3.25 0.55 2.45C0.55 1.4 1.35 0.55 2.5 0.55Z" fill="#fff" stroke="#8592f7" stroke-width="0.95"/><circle cx="2.5" cy="2.35" r="0.75" fill="#3a4cf5"/><path d="M2.5 4.3V6.6" stroke="#8592f7" stroke-width="0.7"/></svg></div>
<div class="rn" style="left:8.6px;top:68px">id</div>
<div class="pill" style="left:152.4px;top:67.5px">int</div>
<div class="rv" style="left:240px;top:68px">NO</div>
<div class="rn" style="left:8.6px;top:87px">text</div>
<div class="pill" style="left:152.4px;top:86.5px">text</div>
<div class="rv" style="left:240px;top:87px">NO</div>
<div class="kw" style="top:105.1px"><svg class="key" width="5" height="8" viewBox="0 0 5 8"><path d="M2.5 0.55C3.65 0.55 4.45 1.4 4.45 2.45C4.45 3.25 3.95 3.8 3.35 4.1L3.15 6.7L2.5 7.5L1.85 6.7L1.65 4.1C1.05 3.8 0.55 3.25 0.55 2.45C0.55 1.4 1.35 0.55 2.5 0.55Z" fill="#fff" stroke="#b8bff6" stroke-width="0.95"/><circle cx="2.5" cy="2.35" r="0.75" fill="#9aa3f2"/><path d="M2.5 4.3V6.6" stroke="#b8bff6" stroke-width="0.7"/></svg></div>
<div class="rn" style="left:8.6px;top:106px">post_id</div>
<div class="pill" style="left:152.4px;top:105.5px">int</div>
<div class="rv" style="left:240px;top:106px">YES</div>
</div>
<div class="tb" style="left:801.5px;top:422.1px;height:120.5px;border-top-color:#f26a3b">
<div class="th">
<svg class="ticon" width="8" height="9" viewBox="0 0 8 9"><rect x="0.6" y="0.6" width="6.6" height="7" rx="1.1" fill="none" stroke="#3b4068" stroke-width="1.1"/><path d="M0.6 2.3H7.2" stroke="#3b4068" stroke-width="1"/><path d="M2.6 2.6V7.6M3.9 2.6V7.6M5.2 2.6V7.6" stroke="#3b4068" stroke-width="0.7"/></svg>
<span class="tname">setups</span>
<svg class="move" width="9" height="9" viewBox="0 0 9 9"><path d="M0.6 4.6H8.4" stroke="#cfd2db" stroke-width="1.1"/><path d="M4.5 0.6L5.5 2.2L5.2 3.6H3.8L3.5 2.2Z M4.5 8.5L5.5 6.9L5.2 5.5H3.8L3.5 6.9Z" fill="#74788a"/></svg>
</div>
<div class="tabs"><span class="tab1">COLUMNS</span><div class="tabul"></div></div>
<div class="hd" style="left:8.6px;top:49px">Name</div>
<div class="hd" style="left:152.4px;top:49px">Type</div>
<div class="hd" style="left:240px;top:49px">Null</div>
<div class="kw" style="top:67.1px"><svg class="key" width="5" height="8" viewBox="0 0 5 8"><path d="M2.5 0.55C3.65 0.55 4.45 1.4 4.45 2.45C4.45 3.25 3.95 3.8 3.35 4.1L3.15 6.7L2.5 7.5L1.85 6.7L1.65 4.1C1.05 3.8 0.55 3.25 0.55 2.45C0.55 1.4 1.35 0.55 2.5 0.55Z" fill="#fff" stroke="#8592f7" stroke-width="0.95"/><circle cx="2.5" cy="2.35" r="0.75" fill="#3a4cf5"/><path d="M2.5 4.3V6.6" stroke="#8592f7" stroke-width="0.7"/></svg></div>
<div class="rn" style="left:8.6px;top:68px">id</div>
<div class="pill" style="left:152.4px;top:67.5px">int</div>
<div class="rv" style="left:240px;top:68px">NO</div>
<div class="rn" style="left:8.6px;top:87px">init_script</div>
<div class="pill" style="left:152.4px;top:86.5px">text</div>
<div class="rv" style="left:240px;top:87px">NO</div>
<div class="rn" style="left:8.6px;top:106px">created_at</div>
<div class="pill" style="left:152.4px;top:105.5px">timestamp</div>
<div class="rv" style="left:240px;top:106px">NO</div>
</div>
<div class="tb" style="left:1171.5px;top:423.1px;height:120.5px;border-top-color:#ea3b3b">
<div class="th">
<svg class="ticon" width="8" height="9" viewBox="0 0 8 9"><rect x="0.6" y="0.6" width="6.6" height="7" rx="1.1" fill="none" stroke="#3b4068" stroke-width="1.1"/><path d="M0.6 2.3H7.2" stroke="#3b4068" stroke-width="1"/><path d="M2.6 2.6V7.6M3.9 2.6V7.6M5.2 2.6V7.6" stroke="#3b4068" stroke-width="0.7"/></svg>
<span class="tname">post_likes</span>
<svg class="move" width="9" height="9" viewBox="0 0 9 9"><path d="M0.6 4.6H8.4" stroke="#cfd2db" stroke-width="1.1"/><path d="M4.5 0.6L5.5 2.2L5.2 3.6H3.8L3.5 2.2Z M4.5 8.5L5.5 6.9L5.2 5.5H3.8L3.5 6.9Z" fill="#74788a"/></svg>
</div>
<div class="tabs"><span class="tab1">COLUMNS</span><div class="tabul"></div></div>
<div class="hd" style="left:8.6px;top:49px">Name</div>
<div class="hd" style="left:152.4px;top:49px">Type</div>
<div class="hd" style="left:240px;top:49px">Null</div>
<div class="rn" style="left:8.6px;top:68px">created_at</div>
<div class="pill" style="left:152.4px;top:67.5px">timestamp</div>
<div class="rv" style="left:240px;top:68px">NO</div>
<div class="kw" style="top:86.1px"><svg class="key" width="5" height="8" viewBox="0 0 5 8"><path d="M2.5 0.55C3.65 0.55 4.45 1.4 4.45 2.45C4.45 3.25 3.95 3.8 3.35 4.1L3.15 6.7L2.5 7.5L1.85 6.7L1.65 4.1C1.05 3.8 0.55 3.25 0.55 2.45C0.55 1.4 1.35 0.55 2.5 0.55Z" fill="#fff" stroke="#8592f7" stroke-width="0.95"/><circle cx="2.5" cy="2.35" r="0.75" fill="#3a4cf5"/><path d="M2.5 4.3V6.6" stroke="#8592f7" stroke-width="0.7"/></svg></div>
<div class="rn" style="left:8.6px;top:87px">post_id</div>
<div class="pill" style="left:152.4px;top:86.5px">int</div>
<div class="rv" style="left:240px;top:87px">YES</div>
<div class="kw" style="top:105.1px"><svg class="key" width="5" height="8" viewBox="0 0 5 8"><path d="M2.5 0.55C3.65 0.55 4.45 1.4 4.45 2.45C4.45 3.25 3.95 3.8 3.35 4.1L3.15 6.7L2.5 7.5L1.85 6.7L1.65 4.1C1.05 3.8 0.55 3.25 0.55 2.45C0.55 1.4 1.35 0.55 2.5 0.55Z" fill="#fff" stroke="#8592f7" stroke-width="0.95"/><circle cx="2.5" cy="2.35" r="0.75" fill="#3a4cf5"/><path d="M2.5 4.3V6.6" stroke="#8592f7" stroke-width="0.7"/></svg></div>
<div class="rn" style="left:8.6px;top:106px">user_id</div>
<div class="pill" style="left:152.4px;top:105.5px">int</div>
<div class="rv" style="left:240px;top:106px">YES</div>
</div>
<div class="tb" style="left:1641.7px;top:435.8px;height:139.5px;border-top-color:#3a7de9">
<div class="th">
<svg class="ticon" width="8" height="9" viewBox="0 0 8 9"><rect x="0.6" y="0.6" width="6.6" height="7" rx="1.1" fill="none" stroke="#3b4068" stroke-width="1.1"/><path d="M0.6 2.3H7.2" stroke="#3b4068" stroke-width="1"/><path d="M2.6 2.6V7.6M3.9 2.6V7.6M5.2 2.6V7.6" stroke="#3b4068" stroke-width="0.7"/></svg>
<span class="tname">blog_posts</span>
<svg class="move" width="9" height="9" viewBox="0 0 9 9"><path d="M0.6 4.6H8.4" stroke="#cfd2db" stroke-width="1.1"/><path d="M4.5 0.6L5.5 2.2L5.2 3.6H3.8L3.5 2.2Z M4.5 8.5L5.5 6.9L5.2 5.5H3.8L3.5 6.9Z" fill="#74788a"/></svg>
</div>
<div class="tabs"><span class="tab1">COLUMNS</span><span class="tab2">FOREIGN KEYS</span><div class="tabul"></div></div>
<div class="hd" style="left:8.6px;top:49px">Name</div>
<div class="hd" style="left:152.4px;top:49px">Type</div>
<div class="hd" style="left:240px;top:49px">Null</div>
<div class="kw" style="top:67.1px"><svg class="key" width="5" height="8" viewBox="0 0 5 8"><path d="M2.5 0.55C3.65 0.55 4.45 1.4 4.45 2.45C4.45 3.25 3.95 3.8 3.35 4.1L3.15 6.7L2.5 7.5L1.85 6.7L1.65 4.1C1.05 3.8 0.55 3.25 0.55 2.45C0.55 1.4 1.35 0.55 2.5 0.55Z" fill="#fff" stroke="#8592f7" stroke-width="0.95"/><circle cx="2.5" cy="2.35" r="0.75" fill="#3a4cf5"/><path d="M2.5 4.3V6.6" stroke="#8592f7" stroke-width="0.7"/></svg></div>
<div class="rn" style="left:8.6px;top:68px">id</div>
<div class="pill" style="left:152.4px;top:67.5px">int</div>
<div class="rv" style="left:240px;top:68px">NO</div>
<div class="rn" style="left:8.6px;top:87px">name</div>
<div class="pill" style="left:152.4px;top:86.5px">varchar</div>
<div class="rv" style="left:240px;top:87px">YES</div>
<div class="rn" style="left:8.6px;top:106px">text</div>
<div class="pill" style="left:152.4px;top:105.5px">text</div>
<div class="rv" style="left:240px;top:106px">YES</div>
<div class="kw" style="top:124.1px"><svg class="key" width="5" height="8" viewBox="0 0 5 8"><path d="M2.5 0.55C3.65 0.55 4.45 1.4 4.45 2.45C4.45 3.25 3.95 3.8 3.35 4.1L3.15 6.7L2.5 7.5L1.85 6.7L1.65 4.1C1.05 3.8 0.55 3.25 0.55 2.45C0.55 1.4 1.35 0.55 2.5 0.55Z" fill="#fff" stroke="#b8bff6" stroke-width="0.95"/><circle cx="2.5" cy="2.35" r="0.75" fill="#9aa3f2"/><path d="M2.5 4.3V6.6" stroke="#b8bff6" stroke-width="0.7"/></svg></div>
<div class="rn" style="left:8.6px;top:125px">writer_id</div>
<div class="pill" style="left:152.4px;top:124.5px">int</div>
<div class="rv" style="left:240px;top:125px">YES</div>
</div>
<div class="tb" style="left:895.1px;top:635.2px;height:120.5px;border-top-color:#20c3c3">
<div class="th">
<svg class="ticon" width="8" height="9" viewBox="0 0 8 9"><rect x="0.6" y="0.6" width="6.6" height="7" rx="1.1" fill="none" stroke="#3b4068" stroke-width="1.1"/><path d="M0.6 2.3H7.2" stroke="#3b4068" stroke-width="1"/><path d="M2.6 2.6V7.6M3.9 2.6V7.6M5.2 2.6V7.6" stroke="#3b4068" stroke-width="0.7"/></svg>
<span class="tname">groups</span>
<svg class="move" width="9" height="9" viewBox="0 0 9 9"><path d="M0.6 4.6H8.4" stroke="#cfd2db" stroke-width="1.1"/><path d="M4.5 0.6L5.5 2.2L5.2 3.6H3.8L3.5 2.2Z M4.5 8.5L5.5 6.9L5.2 5.5H3.8L3.5 6.9Z" fill="#74788a"/></svg>
</div>
<div class="tabs"><span class="tab1">COLUMNS</span><div class="tabul"></div></div>
<div class="hd" style="left:8.6px;top:49px">Name</div>
<div class="hd" style="left:125px;top:49px">Type</div>
<div class="hd" style="left:196px;top:49px">Null</div>
<div class="hd" style="left:223px;top:49px">Default</div>
<div class="kw" style="top:67.1px"><svg class="key" width="5" height="8" viewBox="0 0 5 8"><path d="M2.5 0.55C3.65 0.55 4.45 1.4 4.45 2.45C4.45 3.25 3.95 3.8 3.35 4.1L3.15 6.7L2.5 7.5L1.85 6.7L1.65 4.1C1.05 3.8 0.55 3.25 0.55 2.45C0.55 1.4 1.35 0.55 2.5 0.55Z" fill="#fff" stroke="#8592f7" stroke-width="0.95"/><circle cx="2.5" cy="2.35" r="0.75" fill="#3a4cf5"/><path d="M2.5 4.3V6.6" stroke="#8592f7" stroke-width="0.7"/></svg></div>
<div class="rn" style="left:8.6px;top:68px">id</div>
<div class="pill" style="left:125px;top:67.5px">int</div>
<div class="rv" style="left:196px;top:68px">NO</div>
<div class="rn" style="left:8.6px;top:87px">name</div>
<div class="pill" style="left:125px;top:86.5px">varchar</div>
<div class="rv" style="left:196px;top:87px">YES</div>
<div class="rn" style="left:8.6px;top:106px">active</div>
<div class="pill" style="left:125px;top:105.5px">boolean</div>
<div class="rv" style="left:196px;top:106px">NO</div>
<div class="rv" style="left:223px;top:106px">false</div>
</div>
<div class="tb" style="left:1449.8px;top:602.3px;height:139.5px;border-top-color:#20c3c3">
<div class="th">
<svg class="ticon" width="8" height="9" viewBox="0 0 8 9"><rect x="0.6" y="0.6" width="6.6" height="7" rx="1.1" fill="none" stroke="#3b4068" stroke-width="1.1"/><path d="M0.6 2.3H7.2" stroke="#3b4068" stroke-width="1"/><path d="M2.6 2.6V7.6M3.9 2.6V7.6M5.2 2.6V7.6" stroke="#3b4068" stroke-width="0.7"/></svg>
<span class="tname">users</span>
<svg class="move" width="9" height="9" viewBox="0 0 9 9"><path d="M0.6 4.6H8.4" stroke="#cfd2db" stroke-width="1.1"/><path d="M4.5 0.6L5.5 2.2L5.2 3.6H3.8L3.5 2.2Z M4.5 8.5L5.5 6.9L5.2 5.5H3.8L3.5 6.9Z" fill="#74788a"/></svg>
</div>
<div class="tabs"><span class="tab1">COLUMNS</span><div class="tabul"></div></div>
<div class="hd" style="left:8.6px;top:49px">Name</div>
<div class="hd" style="left:152.4px;top:49px">Type</div>
<div class="hd" style="left:240px;top:49px">Null</div>
<div class="kw" style="top:67.1px"><svg class="key" width="5" height="8" viewBox="0 0 5 8"><path d="M2.5 0.55C3.65 0.55 4.45 1.4 4.45 2.45C4.45 3.25 3.95 3.8 3.35 4.1L3.15 6.7L2.5 7.5L1.85 6.7L1.65 4.1C1.05 3.8 0.55 3.25 0.55 2.45C0.55 1.4 1.35 0.55 2.5 0.55Z" fill="#fff" stroke="#8592f7" stroke-width="0.95"/><circle cx="2.5" cy="2.35" r="0.75" fill="#3a4cf5"/><path d="M2.5 4.3V6.6" stroke="#8592f7" stroke-width="0.7"/></svg></div>
<div class="rn" style="left:8.6px;top:68px">id</div>
<div class="pill" style="left:152.4px;top:67.5px">int</div>
<div class="rv" style="left:240px;top:68px">NO</div>
<div class="rn" style="left:8.6px;top:87px">name</div>
<div class="pill" style="left:152.4px;top:86.5px">varchar</div>
<div class="rv" style="left:240px;top:87px">YES</div>
<div class="rn" style="left:8.6px;top:106px">nickname</div>
<div class="pill" style="left:152.4px;top:105.5px">varchar</div>
<div class="rv" style="left:240px;top:106px">YES</div>
<div class="rn" style="left:8.6px;top:125px">age</div>
<div class="pill" style="left:152.4px;top:124.5px">decimal</div>
<div class="rv" style="left:240px;top:125px">YES</div>
</div>
<div class="tb" style="left:1109.9px;top:851px;height:120.5px;border-top-color:#20c3c3">
<div class="th">
<svg class="ticon" width="8" height="9" viewBox="0 0 8 9"><rect x="0.6" y="0.6" width="6.6" height="7" rx="1.1" fill="none" stroke="#3b4068" stroke-width="1.1"/><path d="M0.6 2.3H7.2" stroke="#3b4068" stroke-width="1"/><path d="M2.6 2.6V7.6M3.9 2.6V7.6M5.2 2.6V7.6" stroke="#3b4068" stroke-width="0.7"/></svg>
<span class="tname">user_groups</span>
<svg class="move" width="9" height="9" viewBox="0 0 9 9"><path d="M0.6 4.6H8.4" stroke="#cfd2db" stroke-width="1.1"/><path d="M4.5 0.6L5.5 2.2L5.2 3.6H3.8L3.5 2.2Z M4.5 8.5L5.5 6.9L5.2 5.5H3.8L3.5 6.9Z" fill="#74788a"/></svg>
</div>
<div class="tabs"><span class="tab1">COLUMNS</span><span class="tab2">FOREIGN KEYS</span><div class="tabul"></div></div>
<div class="hd" style="left:8.6px;top:49px">Name</div>
<div class="hd" style="left:152.4px;top:49px">Type</div>
<div class="hd" style="left:240px;top:49px">Null</div>
<div class="kw" style="top:67.1px"><svg class="key" width="5" height="8" viewBox="0 0 5 8"><path d="M2.5 0.55C3.65 0.55 4.45 1.4 4.45 2.45C4.45 3.25 3.95 3.8 3.35 4.1L3.15 6.7L2.5 7.5L1.85 6.7L1.65 4.1C1.05 3.8 0.55 3.25 0.55 2.45C0.55 1.4 1.35 0.55 2.5 0.55Z" fill="#fff" stroke="#8592f7" stroke-width="0.95"/><circle cx="2.5" cy="2.35" r="0.75" fill="#3a4cf5"/><path d="M2.5 4.3V6.6" stroke="#8592f7" stroke-width="0.7"/><path d="M1.2 1.2C0.6 1.7 0.4 2.6 0.7 3.3" fill="none" stroke="#8592f7" stroke-width="0.8"/></svg></div>
<div class="rn" style="left:8.6px;top:68px">user_id</div>
<div class="pill" style="left:152.4px;top:67.5px">int</div>
<div class="rv" style="left:240px;top:68px">NO</div>
<div class="kw" style="top:86.1px"><svg class="key" width="5" height="8" viewBox="0 0 5 8"><path d="M2.5 0.55C3.65 0.55 4.45 1.4 4.45 2.45C4.45 3.25 3.95 3.8 3.35 4.1L3.15 6.7L2.5 7.5L1.85 6.7L1.65 4.1C1.05 3.8 0.55 3.25 0.55 2.45C0.55 1.4 1.35 0.55 2.5 0.55Z" fill="#fff" stroke="#8592f7" stroke-width="0.95"/><circle cx="2.5" cy="2.35" r="0.75" fill="#3a4cf5"/><path d="M2.5 4.3V6.6" stroke="#8592f7" stroke-width="0.7"/><path d="M1.2 1.2C0.6 1.7 0.4 2.6 0.7 3.3" fill="none" stroke="#8592f7" stroke-width="0.8"/></svg></div>
<div class="rn" style="left:8.6px;top:87px">group_id</div>
<div class="pill" style="left:152.4px;top:86.5px">int</div>
<div class="rv" style="left:240px;top:87px">NO</div>
<div class="rn" style="left:8.6px;top:106px">created_at</div>
<div class="pill" style="left:152.4px;top:105.5px">timestamp</div>
<div class="rv" style="left:240px;top:106px">NO</div>
</div>
<div class="tb" style="left:1430px;top:840.5px;height:139.5px;border-top-color:#20c3c3">
<div class="th">
<svg class="ticon" width="8" height="9" viewBox="0 0 8 9"><rect x="0.6" y="0.6" width="6.6" height="7" rx="1.1" fill="none" stroke="#3b4068" stroke-width="1.1"/><path d="M0.6 2.3H7.2" stroke="#3b4068" stroke-width="1"/><path d="M2.6 2.6V7.6M3.9 2.6V7.6M5.2 2.6V7.6" stroke="#3b4068" stroke-width="0.7"/></svg>
<span class="tname">pets</span>
<svg class="move" width="9" height="9" viewBox="0 0 9 9"><path d="M0.6 4.6H8.4" stroke="#cfd2db" stroke-width="1.1"/><path d="M4.5 0.6L5.5 2.2L5.2 3.6H3.8L3.5 2.2Z M4.5 8.5L5.5 6.9L5.2 5.5H3.8L3.5 6.9Z" fill="#74788a"/></svg>
</div>
<div class="tabs"><span class="tab1">COLUMNS</span><span class="tab2">FOREIGN KEYS</span><div class="tabul"></div></div>
<div class="hd" style="left:8.6px;top:49px">Name</div>
<div class="hd" style="left:152.4px;top:49px">Type</div>
<div class="hd" style="left:240px;top:49px">Null</div>
<div class="kw" style="top:67.1px"><svg class="key" width="5" height="8" viewBox="0 0 5 8"><path d="M2.5 0.55C3.65 0.55 4.45 1.4 4.45 2.45C4.45 3.25 3.95 3.8 3.35 4.1L3.15 6.7L2.5 7.5L1.85 6.7L1.65 4.1C1.05 3.8 0.55 3.25 0.55 2.45C0.55 1.4 1.35 0.55 2.5 0.55Z" fill="#fff" stroke="#8592f7" stroke-width="0.95"/><circle cx="2.5" cy="2.35" r="0.75" fill="#3a4cf5"/><path d="M2.5 4.3V6.6" stroke="#8592f7" stroke-width="0.7"/></svg></div>
<div class="rn" style="left:8.6px;top:68px">id</div>
<div class="pill" style="left:152.4px;top:67.5px">int</div>
<div class="rv" style="left:240px;top:68px">NO</div>
<div class="rn" style="left:8.6px;top:87px">name</div>
<div class="pill" style="left:152.4px;top:86.5px">varchar</div>
<div class="rv" style="left:240px;top:87px">YES</div>
<div class="rn" style="left:8.6px;top:106px">age</div>
<div class="pill" style="left:152.4px;top:105.5px">decimal</div>
<div class="rv" style="left:240px;top:106px">NO</div>
<div class="kw" style="top:124.1px"><svg class="key" width="5" height="8" viewBox="0 0 5 8"><path d="M2.5 0.55C3.65 0.55 4.45 1.4 4.45 2.45C4.45 3.25 3.95 3.8 3.35 4.1L3.15 6.7L2.5 7.5L1.85 6.7L1.65 4.1C1.05 3.8 0.55 3.25 0.55 2.45C0.55 1.4 1.35 0.55 2.5 0.55Z" fill="#fff" stroke="#b8bff6" stroke-width="0.95"/><circle cx="2.5" cy="2.35" r="0.75" fill="#9aa3f2"/><path d="M2.5 4.3V6.6" stroke="#b8bff6" stroke-width="0.7"/></svg></div>
<div class="rn" style="left:8.6px;top:125px">owner_id</div>
<div class="pill" style="left:152.4px;top:124.5px">int</div>
<div class="rv" style="left:240px;top:125px">YES</div>
</div>
  </div>
  <!-- search -->
  <div class="abs" style="left:16px;top:12px;width:34px;height:34px;border-radius:17px;border:1px solid #d9ddf3;background:#fff"></div>
  <svg class="abs" style="left:24px;top:20px" width="18" height="18" viewBox="0 0 18 18" fill="none" stroke="#3b4068" stroke-width="1.5" stroke-linecap="round"><circle cx="8.4" cy="8.4" r="4.6"/><path d="M11.8 11.8L14.6 14.6"/></svg>
  <!-- zoom controls -->
  <div class="abs" style="left:1175px;top:14px;width:133px;height:34px;border-radius:17px;border:1px solid #dfe2f3;background:#fcfcfe;box-shadow:0 1px 2px rgba(30,30,80,0.06)"></div>
  <div class="abs" style="left:1208.6px;top:15px;width:1px;height:32px;background:#e2e5f4"></div>
  <div class="abs" style="left:1241.4px;top:15px;width:1px;height:32px;background:#e2e5f4"></div>
  <div class="abs" style="left:1274.4px;top:15px;width:1px;height:32px;background:#e2e5f4"></div>
  <svg class="abs" style="left:1175px;top:14px" width="133" height="34" viewBox="0 0 133 34" fill="none" stroke="#2b3058" stroke-width="1.7" stroke-linecap="round" stroke-linejoin="round">
    <path d="M17.1 11.6V22.6M11.6 17.1H22.6"/>
    <path d="M44.4 17.1H55.4"/>
    <g transform="translate(1.5 0)"><path d="M75.9 13.2V11.9C75.9 11.2 76.3 10.8 77 10.8H78.3M84.5 10.8H85.8C86.5 10.8 86.9 11.2 86.9 11.9V13.2M86.9 21V22.3C86.9 23 86.5 23.4 85.8 23.4H84.5M78.3 23.4H77C76.3 23.4 75.9 23 75.9 22.3V21"/>
    <circle cx="81.4" cy="17.1" r="1.6"/></g>
    <g transform="translate(2 0)"><path d="M108.5 13.2V11.9C108.5 11.2 108.9 10.8 109.6 10.8H110.9M117.1 10.8H118.4C119.1 10.8 119.5 11.2 119.5 11.9V13.2M119.5 21V22.3C119.5 23 119.1 23.4 118.4 23.4H117.1M110.9 23.4H109.6C108.9 23.4 108.5 23 108.5 22.3V21"/>
    <rect x="110.6" y="14.7" width="6.8" height="4.8" rx="0.5" stroke-width="1.5"/></g>
  </svg>
  <!-- chat bubble -->
  <div class="abs" style="left:1250px;top:849px;width:48px;height:48px;border-radius:24px;background:#0b62a8;box-shadow:0 2px 10px rgba(0,0,0,0.10)"></div>
  <svg class="abs" style="left:1250px;top:849px" width="48" height="48" viewBox="0 0 48 48">
    <path d="M13.4 14.4C13.4 12.7 14.3 11.9 16 11.9H32.2C33.9 11.9 34.7 12.7 34.7 14.4V35.9L29.6 33.5H16C14.3 33.5 13.4 32.7 13.4 31Z" fill="#fff"/>
    <path d="M16.8 26.9C20.9 30.3 27.3 30.3 31.4 26.9" fill="none" stroke="#0b62a8" stroke-width="1.3" stroke-linecap="round"/>
  </svg>
  <div class="abs" style="left:1289px;top:846.8px;width:20px;height:20px;border-radius:10px;background:#f43f46;border:2px solid #fff"></div>
  <div class="txt" style="left:1289px;top:851.5px;width:20px;text-align:center;font-size:12px;font-weight:700;color:#fff">1</div>
</div>

</body></html>
